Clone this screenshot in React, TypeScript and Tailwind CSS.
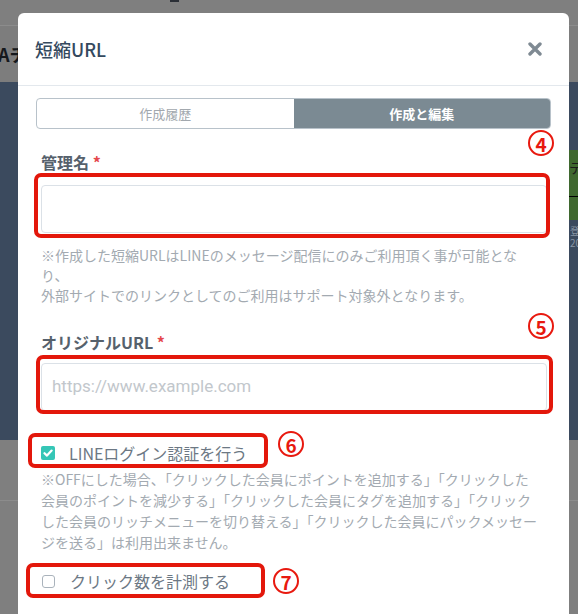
const font = "font-['Noto_Sans_CJK_JP','Noto_Sans',sans-serif]";

const Circled = ({ n, className }: { n: string; className: string }) => (
  <div
    className={
      "absolute w-[26px] h-[26px] rounded-full border-2 border-[#e8190f] flex items-center justify-center text-[#e8190f] text-[19px] font-bold leading-none bg-white " +
      className
    }
  >
    {n}
  </div>
);

const Mark = ({ className }: { className: string }) => (
  <div className={"absolute border-[4px] border-[#e3170b] rounded-[7px] pointer-events-none " + className}></div>
);

const Check = ({ on }: { on: boolean }) =>
  on ? (
    <span className="w-[14px] h-[14px] rounded-[2px] bg-[#35c6b6] flex items-center justify-center shrink-0">
      <svg width="10" height="10" viewBox="0 0 10 10">
        <path d="M1.5 5.2 L4 7.6 L8.6 2.6" fill="none" stroke="white" strokeWidth="2.2" strokeLinecap="round" strokeLinejoin="round" />
      </svg>
    </span>
  ) : (
    <span className="w-[13px] h-[13px] rounded-[3px] border border-[#aab3bc] bg-white shrink-0"></span>
  );

function Background() {
  return (
    <div className="absolute inset-0 flex flex-col">
      <div className="h-[25px] bg-[#7f7f7f] relative">
        <div className="absolute left-[170px] top-0 w-[9px] h-[2px] bg-[#2b2f36]"></div>
      </div>
      <div className="h-px bg-[#8c8c8c]"></div>
      <div className="h-[56px] bg-[#7d7d7d] flex items-center">
        <span className="text-[18px] text-[#15181c] font-bold -ml-[2px]">Aチ</span>
      </div>
      <div className="h-[358px] bg-[#3b4a5e] relative">
        <div className="absolute left-[569px] top-[68px] w-[12px] h-[70px] bg-[#3f682f] overflow-hidden">
          <span className="block text-[14px] leading-none mt-[10px] text-[#1b1b1b]">テ</span>
          <div className="h-px bg-black mt-[22px]"></div>
        </div>
        <div className="absolute left-[570px] top-[143px] text-[10px] text-[#8894a3] leading-[12px]">
          <div>登</div>
          <div>20</div>
        </div>
      </div>
      <div className="h-[60px] bg-[#7f7f7f]"></div>
      <div className="h-px bg-[#8c8c8c]"></div>
      <div className="flex-1 bg-[#7f7f7f]"></div>
    </div>
  );
}

export default function App() {
  return (
    <div className={"relative w-[578px] h-[614px] overflow-hidden " + font}>
      <Background />
      <div className="absolute left-[18px] top-[13px] w-[551px] h-[640px] bg-white rounded-[6px]">
        <div className="h-[73px] flex items-center justify-between pl-[17px] pr-[27px] border-b border-[#e3e8ed]">
          <h1 className="text-[18px] text-[#34495e] font-medium">短縮URL</h1>
          <svg width="14" height="14" viewBox="0 0 14 14">
            <path d="M2 2 L12 12 M12 2 L2 12" stroke="#7f8a93" strokeWidth="3.4" strokeLinecap="round" />
          </svg>
        </div>

        <div className="mx-[18px] mt-[12px] h-[31px] flex border border-[#b8c2ca] rounded-[4px] overflow-hidden text-[13px]">
          <div className="flex-1 flex items-center justify-center text-[#a2a8ae]">作成履歴</div>
          <div className="flex-1 flex items-center justify-center bg-[#7b8a93] text-white font-bold">作成と編集</div>
        </div>

        <div className="px-[23px] pr-[22px]">
          <div className="mt-[21px] text-[16px] leading-[24px] font-bold text-[#56616c]">
            管理名 <span className="text-[#e5484d]">*</span>
          </div>
          <div className="mt-[11px] h-[48px] border border-[#dbe1e7] rounded-[4px]"></div>
          <p className="mt-[12px] text-[14px] leading-[20px] text-[#a3aab1] whitespace-nowrap">
            ※作成した短縮URLはLINEのメッセージ配信にのみご利用頂く事が可能とな
            <br />
            り、
            <br />
            外部サイトでのリンクとしてのご利用はサポート対象外となります。
          </p>

          <div className="mt-[25px] text-[16px] leading-[24px] font-bold text-[#56616c]">
            オリジナルURL <span className="text-[#e5484d]">*</span>
          </div>
          <div className="mt-[9px] h-[48px] border border-[#dbe1e7] rounded-[4px] flex items-center px-[10px] text-[17px] text-[#c2c7cc] font-['Roboto',sans-serif]">
            https://www.example.com
          </div>

          <label className="mt-[30px] flex items-center gap-[14px] text-[16px] leading-[24px] text-[#6c7884]">
            <Check on={true} />
            LINEログイン認証を行う
          </label>
          <p className="mt-[4px] text-[14px] leading-[21px] text-[#a3aab1] whitespace-nowrap">
            ※OFFにした場合、「クリックした会員にポイントを追加する」「クリックした
            <br />
            会員のポイントを減少する」「クリックした会員にタグを追加する」「クリック
            <br />
            した会員のリッチメニューを切り替える」「クリックした会員にパックメッセー
            <br />
            ジを送る」は利用出来ません。
          </p>

          <label className="mt-[16px] flex items-center gap-[15px] text-[16px] leading-[24px] text-[#6c7884] pl-[1px]">
            <Check on={false} />
            クリック数を計測する
          </label>
        </div>

        <Circled n="4" className="left-[510px] top-[117px]" />
        <Mark className="left-[16px] top-[160px] w-[516px] h-[65px]" />
        <Circled n="5" className="left-[510px] top-[300px]" />
        <Mark className="left-[18px] top-[342px] w-[517px] h-[59px]" />
        <Mark className="left-[10px] top-[420px] w-[240px] h-[35px]" />
        <Circled n="6" className="left-[260px] top-[418px]" />
        <Mark className="left-[8px] top-[550px] w-[239px] h-[35px]" />
        <Circled n="7" className="left-[255px] top-[555px]" />
      </div>
    </div>
  );
}
